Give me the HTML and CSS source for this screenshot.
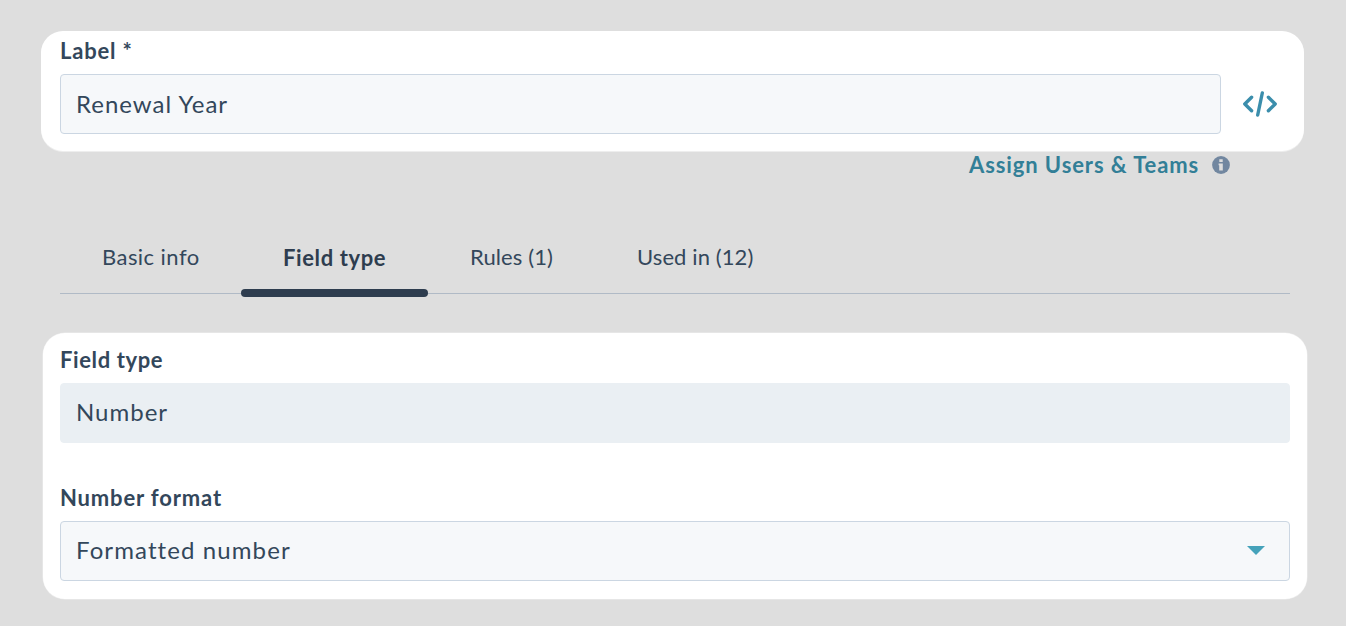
FILE: index.html
```html
<!DOCTYPE html>
<html lang="en">
<head>
  <meta charset="UTF-8">
  <title>Edit property</title>
  <link rel="stylesheet" href="styles.css">
</head>
<body>
  <!-- Label -->
  <section class="panel panel-label">
    <label class="field-label label-name" for="label">Label *</label>
    <div class="input-row">
      <div class="field" id="label"><span class="value-name">Renewal Year</span></div>
      <svg class="code-icon" width="36" height="28" viewBox="0 0 36 28">
        <path d="M9.6 7.2 2.8 14l6.8 6.8M26.4 7.2l6.8 6.8-6.8 6.8M20.3 3 15.7 25" />
      </svg>
    </div>
  </section>

  <div class="assign">
    <a class="assign-link">Assign Users &amp; Teams</a>
    <svg class="info-icon" width="18" height="18" viewBox="0 0 18 18">
      <circle cx="9" cy="9" r="8.9" fill="#7287a0" />
      <path d="M7.3 3.2h3.4v2.9H7.3zM6.6 7.4h4.2v7H7.2V9.2h-.6z" fill="#dedede" />
    </svg>
  </div>

  <!-- Tabs -->
  <nav class="tabs">
    <a class="tab tab-basic"><span>Basic info</span></a>
    <a class="tab tab-type active"><span>Field type</span></a>
    <a class="tab tab-rules"><span>Rules (1)</span></a>
    <a class="tab tab-used"><span>Used in (12)</span></a>
  </nav>

  <!-- Field type -->
  <section class="panel panel-type">
    <div class="field-label label-type">Field type</div>
    <div class="field readonly"><span class="value-type">Number</span></div>
    <div class="field-label label-format">Number format</div>
    <div class="field select">
      <span class="value-format">Formatted number</span>
      <span class="caret"></span>
    </div>
  </section>
</body>
</html>
```

FILE: styles.css
```css
* {
  box-sizing: border-box;
}
body {
  margin: 0;
  padding-top: 31px;
  height: 626px;
  overflow: hidden;
  background: #dedede;
  color: #33475b;
  font-family: Lato, "Open Sans", sans-serif;
}
.panel {
  background: #fff;
  border-radius: 22px;
}
.panel-label {
  width: 1263px;
  height: 120px;
  margin-left: 41px;
  padding: 5px 19px 0;
  box-shadow: 0 1px 0 #eee;
}
.field-label {
  display: block;
  height: 30px;
  line-height: 30px;
  font-size: 22px;
  font-weight: 700;
  letter-spacing: 0.6px;
  white-space: nowrap;
}
.label-name {
  letter-spacing: 0.8px;
}
.input-row {
  display: flex;
  align-items: center;
  gap: 21px;
  margin-top: 8px;
}
.field {
  display: flex;
  align-items: center;
  justify-content: space-between;
  width: 1230px;
  height: 60px;
  padding: 0 24px 2px 15px;
  border: 1px solid #cbd6e2;
  border-radius: 4px;
  background: #f6f8fa;
  font-size: 24px;
  letter-spacing: 1px;
  white-space: nowrap;
}
.input-row .field {
  width: 1161px;
}
.code-icon {
  fill: none;
  stroke: #3b8eac;
  stroke-width: 3.4;
  stroke-linecap: round;
  stroke-linejoin: round;
}
.assign {
  display: flex;
  align-items: center;
  justify-content: space-between;
  width: 261px;
  height: 28px;
  margin-left: 969px;
}
.assign-link {
  padding-bottom: 2px;
  color: #327f97;
  font-size: 22px;
  font-weight: 700;
  letter-spacing: 0.9px;
  white-space: nowrap;
}
.tabs {
  display: flex;
  width: 1230px;
  height: 72px;
  margin: 43px 0 0 60px;
  border-bottom: 1px solid #b0bac6;
}
.tab {
  position: relative;
  height: 71px;
  padding-left: 42px;
  line-height: 70px;
  font-size: 22px;
  letter-spacing: 0.1px;
  white-space: nowrap;
}
.tab-basic {
  width: 181px;
  letter-spacing: 0.45px;
}
.tab-type {
  width: 187px;
  letter-spacing: 0.6px;
}
.tab-rules {
  width: 167px;
}
.tab-used {
  width: 201px;
}
.tab.active {
  line-height: 72px;
  color: #2e3d4f;
  font-weight: 700;
}
.tab.active::after {
  content: "";
  position: absolute;
  left: 0;
  bottom: -4px;
  width: 100%;
  height: 8px;
  border-radius: 4px;
  background: #2e3d4f;
}
.panel-type {
  width: 1264px;
  height: 266px;
  margin: 39px 0 0 43px;
  padding: 12px 17px 0;
  box-shadow: 0 0 0 0.5px #eee;
}
.panel-type .field {
  margin-top: 8px;
  padding-bottom: 4px;
}
.panel-type .readonly {
  border-color: #eaeff3;
  background: #eaeff3;
}
.label-format {
  margin-top: 40px;
  letter-spacing: 0.85px;
}
.value-format {
  letter-spacing: 1.1px;
}
.caret {
  margin-top: 3px;
  border: 9px solid transparent;
  border-top-color: #45a2ba;
  border-bottom: 0;
}
```
